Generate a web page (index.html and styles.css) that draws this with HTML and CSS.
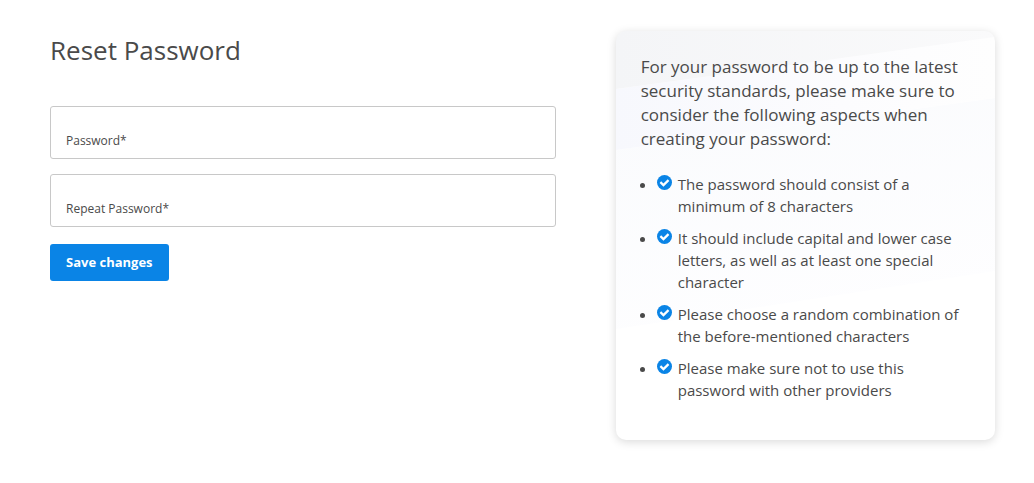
FILE: index.html
```html
<!DOCTYPE html>
<html lang="en">
<head>
    <meta charset="UTF-8">
    <meta name="viewport" content="width=device-width, initial-scale=1.0">
    <title>Reset Password</title>
    <link rel="stylesheet" href="styles.css">
</head>
<body>
    <svg class="sprite" aria-hidden="true">
        <symbol id="check" viewBox="0 0 16 16">
            <circle cx="8" cy="8" r="8" fill="#0a84e6" />
            <path d="M3.6 7.6 L6.9 10.8 L12.3 5.5" fill="none" stroke="#fff" stroke-width="2.4" />
        </symbol>
    </svg>
    <main class="reset">
        <form class="reset-form">
            <h1 class="title">Reset Password</h1>
            <div class="field">
                <input type="password" id="password" placeholder=" " required>
                <label for="password">Password*</label>
            </div>
            <div class="field">
                <input type="password" id="repeat" placeholder=" " required>
                <label for="repeat">Repeat Password*</label>
            </div>
            <button class="save" type="submit">Save changes</button>
        </form>
        <aside class="card">
            <svg class="card-bg" viewBox="0 0 378 409" preserveAspectRatio="none" aria-hidden="true">
                <defs>
                    <linearGradient id="grey" x1="0" y1="0" x2="1" y2="0">
                        <stop offset="0" stop-color="#f4f5f7" />
                        <stop offset="1" stop-color="#fafafb" />
                    </linearGradient>
                    <linearGradient id="mid" x1="0" y1="0" x2="1" y2="0">
                        <stop offset="0" stop-color="#f7f8fd" />
                        <stop offset="0.6" stop-color="#fcfcfe" />
                        <stop offset="1" stop-color="#fefefe" />
                    </linearGradient>
                    <linearGradient id="low" x1="0.2" y1="0" x2="0.6" y2="1">
                        <stop offset="0" stop-color="#fafbfd" />
                        <stop offset="1" stop-color="#fefeff" />
                    </linearGradient>
                </defs>
                <path d="M0 119 L378 67 V240 L0 298 Z" fill="url(#low)" />
                <path d="M0 58 L378 6 V67 L0 119 Z" fill="url(#mid)" />
                <path d="M0 0 H378 V6 L0 58 Z" fill="url(#grey)" />
            </svg>
            <p class="intro">For your password to be up to the latest security standards, please make sure to consider the following aspects when creating your password:</p>
            <ul class="rules">
                <li><svg class="check"><use href="#check" /></svg>The password should consist of a minimum of 8 characters</li>
                <li><svg class="check"><use href="#check" /></svg>It should include capital and lower case letters, as well as at least one special character</li>
                <li><svg class="check"><use href="#check" /></svg>Please choose a random combination of the before-mentioned characters</li>
                <li><svg class="check"><use href="#check" /></svg>Please make sure not to use this password with other providers</li>
            </ul>
        </aside>
    </main>
</body>
</html>
```
FILE: styles.css
```css
* {
    box-sizing: border-box;
}
body {
    margin: 0;
    background: #fff;
    color: #4a4a4a;
    font-family: "Open Sans", sans-serif;
}
.sprite {
    display: none;
}
.reset {
    display: grid;
    grid-template-columns: 4fr 3fr;
    align-items: start;
    gap: 60px;
    padding: 31px 39px 31px 50px;
}

.title {
    margin: 0 0 37px;
    font-size: 26px;
    font-weight: 400;
    line-height: 38px;
}
.field {
    position: relative;
    margin-bottom: 15px;
}
.field input {
    display: block;
    width: 100%;
    height: 53px;
    padding: 16px 15px 0;
    border: 1px solid #c8c8c8;
    border-radius: 3px;
    background: #fff;
    color: inherit;
    font: inherit;
    font-size: 14px;
}
.field label {
    position: absolute;
    left: 16px;
    bottom: 10px;
    font-size: 12px;
    line-height: 16px;
    pointer-events: none;
    transition: bottom 0.2s;
}
.field input:focus + label,
.field input:not(:placeholder-shown) + label {
    bottom: 32px;
}
.save {
    margin-top: 2px;
    padding: 0 16px;
    border: 0;
    border-radius: 3px;
    background: #0a84e6;
    color: #fff;
    font: 700 13px/37px "Open Sans", sans-serif;
    cursor: pointer;
}

.card {
    position: relative;
    padding: 24px 25px 39px;
    border-radius: 10px;
    box-shadow: 0 2px 10px rgba(0, 0, 0, 0.15);
}
.card-bg {
    position: absolute;
    inset: 0;
    z-index: -1;
    width: 100%;
    height: 100%;
    border-radius: 10px;
    background: #fff;
}
.intro {
    margin: 0 0 22px;
    font-size: 17px;
    line-height: 24px;
}
.rules {
    display: grid;
    gap: 10px;
    margin: 0;
    padding-left: 37px;
    list-style: none;
    font-size: 15px;
    line-height: 22px;
}
.rules li {
    position: relative;
}
.rules li::before {
    content: "";
    position: absolute;
    left: -38px;
    top: 10px;
    width: 5px;
    height: 5px;
    border-radius: 50%;
    background: #4a4a4a;
}
.check {
    position: absolute;
    left: -21px;
    top: 2px;
    width: 15px;
    height: 15px;
}
```
